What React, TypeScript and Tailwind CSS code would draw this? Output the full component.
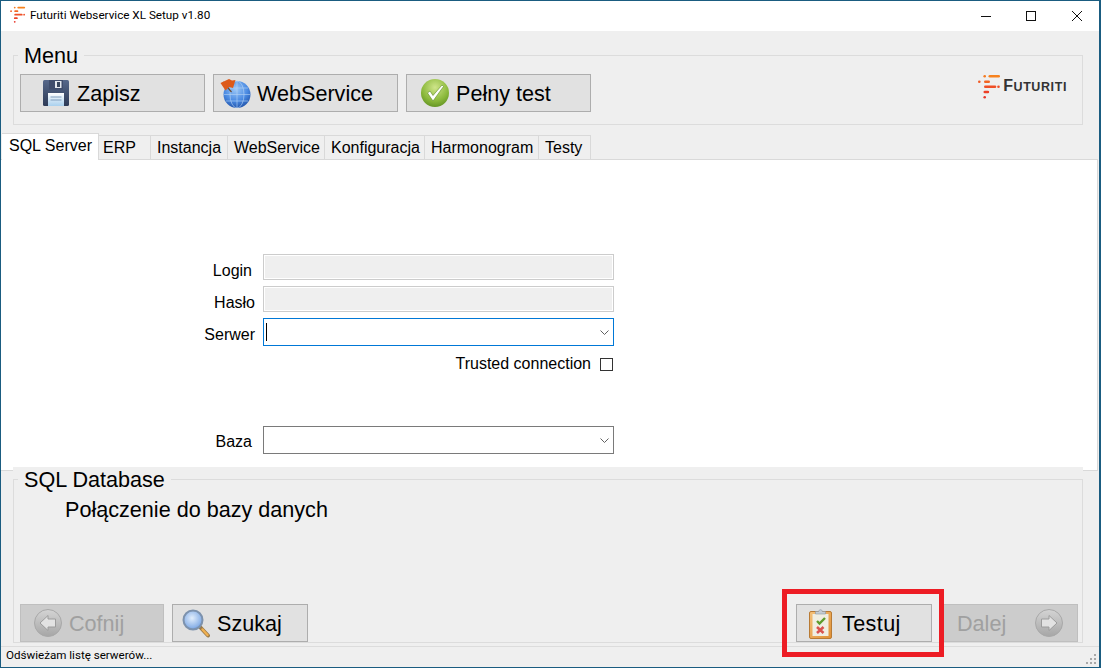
import type { ReactNode } from "react";

const FutLogo = ({ className }: { className: string }) => (
  <svg viewBox="9 8 23 25" className={className}>
    <circle cx="15.7" cy="10.3" r="1.3" fill="#f47a20" />
    <rect x="19.5" y="9" width="11.5" height="2.6" rx="1.3" fill="#f7821e" />
    <circle cx="10.3" cy="15.7" r="1.3" fill="#f15a24" />
    <rect x="15" y="14.4" width="6" height="2.6" rx="1.3" fill="#f26522" />
    <rect x="15" y="19.4" width="12.3" height="2.6" rx="1.3" fill="#ef4f26" />
    <circle cx="29.5" cy="20.7" r="1.3" fill="#ef4f26" />
    <rect x="14.5" y="24.7" width="5.7" height="2.6" rx="1.3" fill="#ec3f26" />
    <circle cx="15.7" cy="31.3" r="1.3" fill="#e8362a" />
  </svg>
);

const FloppyIcon = () => (
  <svg viewBox="0 0 26 26" className="w-[26px] h-[26px] shrink-0">
    <defs>
      <linearGradient id="fl" x1="0" y1="0" x2="0" y2="1">
        <stop offset="0" stopColor="#56688a" />
        <stop offset="1" stopColor="#2e3b57" />
      </linearGradient>
      <linearGradient id="lb" x1="0" y1="0" x2="0" y2="1">
        <stop offset="0" stopColor="#ffffff" />
        <stop offset="1" stopColor="#a9d0ee" />
      </linearGradient>
    </defs>
    <rect x="0" y="0" width="26" height="26" rx="1.5" fill="url(#fl)" />
    <rect x="6" y="0" width="14" height="9.5" fill="#3f4d6c" />
    <rect x="12" y="1" width="6.5" height="7" fill="#e4e8ee" />
    <rect x="14" y="2" width="3" height="5" fill="#39475f" />
    <rect x="5" y="13" width="16" height="13" fill="url(#lb)" />
    <path d="M7.5 17h11M7.5 20h11" stroke="#7f9cbc" strokeWidth="1" />
  </svg>
);

const GlobeIcon = () => (
  <svg viewBox="0 0 31 29" className="w-[31px] h-[29px] shrink-0">
    <defs>
      <radialGradient id="gb" cx="0.45" cy="0.3" r="0.8">
        <stop offset="0" stopColor="#9cc8f7" />
        <stop offset="0.55" stopColor="#4a8ae2" />
        <stop offset="1" stopColor="#17459a" />
      </radialGradient>
    </defs>
    <circle cx="17" cy="15.5" r="13.5" fill="url(#gb)" />
    <path d="M4 15.5h26M17 2v27M6 9h22M6 22h22" stroke="#b6d4f5" strokeWidth="0.6" fill="none" />
    <ellipse cx="17" cy="15.5" rx="7" ry="13.5" stroke="#b6d4f5" strokeWidth="0.6" fill="none" />
    <path d="M3 3l8.5 10" stroke="#6a4a30" strokeWidth="1.2" />
    <path d="M0.5 4L9 0l3 1.5L15.5 1 13 9l-4-1-3.5 3.5z" fill="#dd5a1a" />
  </svg>
);

const CheckIcon = () => (
  <svg viewBox="0 0 28 28" className="w-[28px] h-[28px] shrink-0">
    <defs>
      <radialGradient id="ck" cx="0.5" cy="0.3" r="0.8">
        <stop offset="0" stopColor="#cfe58a" />
        <stop offset="0.6" stopColor="#8ab83a" />
        <stop offset="1" stopColor="#55861c" />
      </radialGradient>
    </defs>
    <circle cx="14" cy="14" r="14" fill="url(#ck)" />
    <path d="M6.5 14l2.5-2 3 4.5L21 6l1.5 1.5L12 22z" fill="#ffffff" stroke="#5d8a24" strokeWidth="0.6" strokeLinejoin="round" />
  </svg>
);

const ArrowIcon = ({ flip }: { flip?: boolean }) => (
  <svg viewBox="0 0 28 28" className="w-[28px] h-[28px] shrink-0">
    <defs>
      <linearGradient id="ar" x1="0" y1="0" x2="0" y2="1">
        <stop offset="0" stopColor="#d4d4d4" />
        <stop offset="1" stopColor="#a6a6a6" />
      </linearGradient>
    </defs>
    <circle cx="14" cy="14" r="13.5" fill="url(#ar)" stroke="#a8a8a8" />
    <path
      d={flip ? "M22 14l-8-7.5V10H6.5v8H14v3.5z" : "M6 14l8-7.5V10h7.5v8H14v3.5z"}
      fill="#e2e2e2"
      stroke="#9c9c9c"
      strokeLinejoin="round"
    />
  </svg>
);

const SearchIcon = () => (
  <svg viewBox="0 0 28 29" className="w-[28px] h-[29px] shrink-0">
    <defs>
      <radialGradient id="sr" cx="0.45" cy="0.4" r="0.7">
        <stop offset="0" stopColor="#e2eefc" />
        <stop offset="0.7" stopColor="#8db3e8" />
        <stop offset="1" stopColor="#4a78c8" />
      </radialGradient>
    </defs>
    <path d="M18 18l8 8.5" stroke="#9a7a4a" strokeWidth="4" strokeLinecap="round" />
    <path d="M20.5 20.5l5 5.5" stroke="#f0b050" strokeWidth="2.4" strokeLinecap="round" />
    <circle cx="11" cy="11" r="9.5" fill="url(#sr)" stroke="#7d92ad" strokeWidth="2" />
  </svg>
);

const ClipboardIcon = () => (
  <svg viewBox="0 0 23 31" className="w-[23px] h-[31px] shrink-0">
    <defs>
      <linearGradient id="cb" x1="0" y1="0" x2="1" y2="1">
        <stop offset="0" stopColor="#f5c27a" />
        <stop offset="1" stopColor="#e08f34" />
      </linearGradient>
    </defs>
    <rect x="0.5" y="3.5" width="22" height="27" rx="1.5" fill="url(#cb)" stroke="#b87a34" />
    <rect x="3.5" y="6" width="16" height="22" fill="#f0eee2" />
    <path d="M6.5 6V3.5h3.2C10 1 13 1 13.3 3.5h3.2V6z" fill="#c4ccd4" stroke="#8c97a3" strokeWidth="0.6" />
    <path d="M8 13l2.5 2.5L16 10" stroke="#5e9c2c" strokeWidth="2.4" fill="none" />
    <path d="M8 19l6.5 6M14.5 19L8 25" stroke="#d9534f" strokeWidth="2.6" />
  </svg>
);

const Chevron = () => (
  <svg viewBox="0 0 9 5" className="w-[9px] h-[5px] ml-auto mr-[4px]">
    <path d="M0.5 0.5l4 4 4-4" stroke="#606060" fill="none" />
  </svg>
);

const ToolButton = ({ className, children }: { className: string; children: ReactNode }) => (
  <div className={`h-[38px] flex items-center border text-[21.6px] ${className}`}>{children}</div>
);

const tabs = [
  { label: "ERP", cls: "w-[52px] pl-[4px]" },
  { label: "Instancja", cls: "w-[77px] pl-[6px]" },
  { label: "WebService", cls: "w-[97px] pl-[6px]" },
  { label: "Konfiguracja", cls: "w-[100px] pl-[6px]" },
  { label: "Harmonogram", cls: "w-[114px] pl-[6px]" },
  { label: "Testy", cls: "w-[52px] pl-[6px]" },
];

const btn = "bg-[#e1e1e1] border-[#adadad] text-black";
const btnOff = "bg-[#cccccc] border-[#bfbfbf] text-[#a0a0a0]";

export default function App() {
  return (
    <div className="relative w-[1103px] h-[669px] bg-white overflow-hidden" style={{ fontFamily: '"Liberation Sans", Arial, sans-serif' }}>
      <div className="w-[1101px] h-[668px] border-[#1a5c80] border-t border-l border-b border-r-2 bg-[#efefef] flex flex-col text-black">
        {/* title bar */}
        <div className="h-[30px] shrink-0 bg-white flex items-center">
          <FutLogo className="w-[16px] h-[17px] ml-[9px] mr-[4px] mt-[-3px]" />
          <span className="text-[11.7px] mt-[-1px]" style={{ fontFamily: 'Roboto, sans-serif' }}>
            Futuriti Webservice XL Setup v1.80
          </span>
          <div className="ml-auto flex items-center mr-[17px] mt-[-1px]">
            <svg viewBox="0 0 10 10" className="w-[10px] h-[10px]">
              <path d="M0 5.5h10" stroke="#111" />
            </svg>
            <svg viewBox="0 0 10 10" className="w-[10px] h-[10px] ml-[35px]">
              <rect x="0.5" y="0.5" width="9" height="9" stroke="#111" fill="none" />
            </svg>
            <svg viewBox="0 0 10 10" className="w-[10px] h-[10px] ml-[36px]">
              <path d="M0 0l10 10M10 0L0 10" stroke="#111" />
            </svg>
          </div>
        </div>

        {/* menu */}
        <div className="relative shrink-0 ml-[12px] mt-[24px] w-[1070px] h-[70px] border border-[#dcdcdc] flex items-start pl-[6px] pt-[18px] gap-[8px]">
          <span className="absolute left-[4px] top-[-11px] bg-[#efefef] px-[6px] text-[21.6px] leading-[22px]">Menu</span>
          <ToolButton className={`${btn} w-[185px] pl-[22px] gap-[8px]`}>
            <FloppyIcon />
            <span className="mt-[2px]">Zapisz</span>
          </ToolButton>
          <ToolButton className={`${btn} w-[185px] pl-[6px] gap-[6px]`}>
            <GlobeIcon />
            <span className="mt-[2px]">WebService</span>
          </ToolButton>
          <ToolButton className={`${btn} w-[185px] pl-[14px] gap-[7px]`}>
            <CheckIcon />
            <span className="mt-[2px]">Pełny test</span>
          </ToolButton>
          <div className="ml-auto mr-[15px] flex items-center">
            <FutLogo className="w-[23px] h-[25px] mr-[2px]" />
            <span className="text-[#333333] font-bold tracking-[0.6px] text-[12.5px] mt-[-2px]">
              <span className="text-[16px]">F</span>UTURITI
            </span>
          </div>
        </div>

        {/* tabs */}
        <div className="relative z-10 shrink-0 mt-[8px] ml-[1px] h-[27px] -mb-px flex items-end text-[16px]">
          <div className="w-[97px] h-[27px] bg-white border-t border-r border-[#d9d9d9] pl-[7px]">SQL Server</div>
          {tabs.map((t) => (
            <div key={t.label} className={`${t.cls} h-[25px] border-t border-r border-b border-[#d9d9d9]`}>
              {t.label}
            </div>
          ))}
        </div>

        {/* main panel */}
        <div className="shrink-0 w-[1097px] h-[312px] bg-white border-t border-r border-b border-[#d9d9d9] pt-[94px] text-[16px]">
          <div className="w-[613px] flex flex-col">
            <div className="flex items-center justify-end h-[26px]">
              <span className="mr-[11px] mt-[8px]">Login</span>
              <div className="w-[351px] h-[26px] bg-[#efefef] border border-[#cccccc] shadow-[inset_0_0_0_1px_#ffffff]" />
            </div>
            <div className="flex items-center justify-end h-[26px] mt-[6px]">
              <span className="mr-[8px] mt-[8px]">Hasło</span>
              <div className="w-[351px] h-[26px] bg-[#efefef] border border-[#cccccc] shadow-[inset_0_0_0_1px_#ffffff]" />
            </div>
            <div className="flex items-center justify-end h-[28px] mt-[6px]">
              <span className="mr-[8px] mt-[6px]">Serwer</span>
              <div className="w-[351px] h-[28px] bg-white border border-[#0078d7] flex items-center pl-[2px]">
                <div className="w-px h-[18px] bg-black" />
                <Chevron />
              </div>
            </div>
            <div className="flex items-center justify-end h-[14px] mt-[11px]">
              <span className="mr-[9px]">Trusted connection</span>
              <div className="w-[13px] h-[13px] border border-[#333333] bg-white mr-px" />
            </div>
            <div className="flex items-center justify-end h-[28px] mt-[55px]">
              <span className="mr-[11px] mt-[3px]">Baza</span>
              <div className="w-[351px] h-[28px] bg-white border border-[#7a7a7a] flex items-center">
                <Chevron />
              </div>
            </div>
          </div>
        </div>

        {/* bottom section */}
        <div className="relative shrink-0 ml-[12px] w-[1070px] -mt-[4px] pt-[12px] bg-[#efefef]">
          <div className="relative h-[164px] border border-[#dcdcdc] flex flex-col">
            <span className="absolute left-[4px] top-[-11px] bg-[#efefef] px-[6px] text-[21.6px] leading-[22px]">SQL Database</span>
            <div className="text-[21.6px] leading-[24px] ml-[51px] mt-[18px]">Połączenie do bazy danych</div>
            <div className="mt-auto flex pl-[6px]">
              <ToolButton className={`${btnOff} w-[144px] pl-[13px] gap-[7px]`}>
                <ArrowIcon />
                <span className="mt-[2px]">Cofnij</span>
              </ToolButton>
              <ToolButton className={`${btn} w-[136px] ml-[8px] pl-[9px] gap-[7px]`}>
                <SearchIcon />
                <span className="mt-[2px]">Szukaj</span>
              </ToolButton>
              <ToolButton className={`${btn} w-[136px] ml-auto pl-[12px] gap-[10px]`}>
                <ClipboardIcon />
                <span className="mt-[2px] tracking-[0.4px]">Testuj</span>
              </ToolButton>
              <ToolButton className={`${btnOff} w-[138px] ml-[8px] mr-[4px] pl-[16px]`}>
                <span className="mt-[2px]">Dalej</span>
                <span className="ml-auto mr-[14px] flex">
                  <ArrowIcon flip />
                </span>
              </ToolButton>
            </div>
          </div>
        </div>

        {/* status bar */}
        <div className="relative flex-1 mt-[3px] border-t border-[#dcdcdc] flex items-center pl-[5px]">
          <span className="text-[11.6px] mt-[-2px]" style={{ fontFamily: 'Roboto, sans-serif' }}>
            Odświeżam listę serwerów...
          </span>
          <svg viewBox="0 0 12 12" className="absolute right-[2px] bottom-[1px] w-[12px] h-[12px]">
            <g fill="#a8a8a8">
              <rect x="9" y="0" width="2" height="2" />
              <rect x="5" y="4" width="2" height="2" />
              <rect x="9" y="4" width="2" height="2" />
              <rect x="1" y="8" width="2" height="2" />
              <rect x="5" y="8" width="2" height="2" />
              <rect x="9" y="8" width="2" height="2" />
            </g>
          </svg>
        </div>
      </div>

      {/* red highlight */}
      <div className="absolute left-[782px] top-[589px] w-[162px] h-[68px] border-[5px] border-[#ed1c24]" />
    </div>
  );
}
